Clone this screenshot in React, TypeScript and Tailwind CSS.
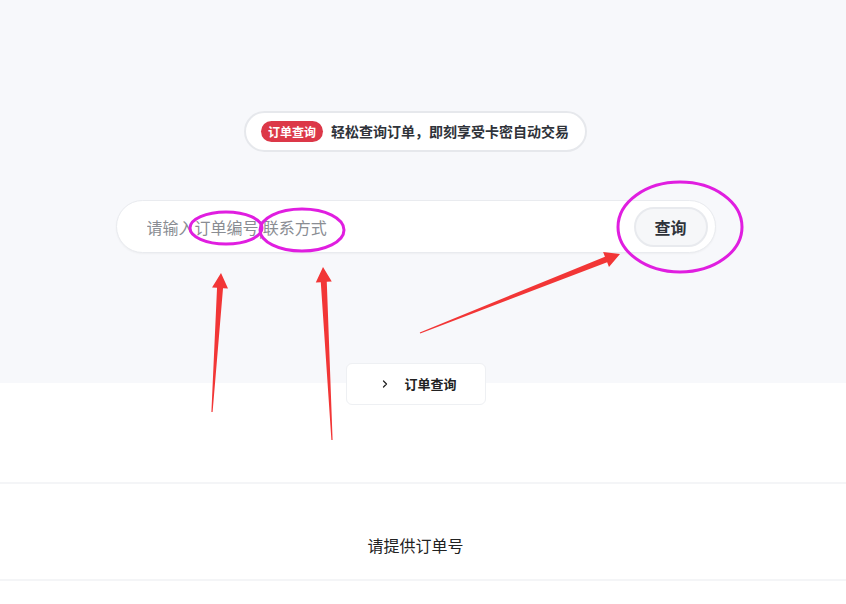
import { ChevronRight } from 'lucide-react';

const font = { fontFamily: '"Noto Sans CJK SC", "Noto Sans", sans-serif' };

// tapered arrow: thin at the tail, head at the tip
function arrowPoints(x1: number, y1: number, x2: number, y2: number) {
  const dx = x2 - x1;
  const dy = y2 - y1;
  const len = Math.hypot(dx, dy);
  const ux = dx / len;
  const uy = dy / len;
  const nx = -uy;
  const ny = ux;
  const head = 15;
  const bx = x2 - ux * head;
  const by = y2 - uy * head;
  const pts: [number, number][] = [
    [x1 + nx * 0.6, y1 + ny * 0.6],
    [bx + nx * 3, by + ny * 3],
    [bx + nx * 8, by + ny * 8],
    [x2, y2],
    [bx - nx * 8, by - ny * 8],
    [bx - nx * 3, by - ny * 3],
    [x1 - nx * 0.6, y1 - ny * 0.6],
  ];
  return pts.map(p => p.join(',')).join(' ');
}

function Annotations() {
  return (
    <svg className="absolute inset-0 pointer-events-none" width={846} height={604}>
      <ellipse cx={226} cy={228} rx={36} ry={16} fill="none" stroke="#e01ee0" strokeWidth={3} />
      <ellipse cx={302} cy={230} rx={42} ry={21} fill="none" stroke="#e01ee0" strokeWidth={3} />
      <ellipse cx={680} cy={227} rx={62} ry={45} fill="none" stroke="#e01ee0" strokeWidth={3} />
      <polygon points={arrowPoints(212, 412, 221, 273)} fill="#f23636" />
      <polygon points={arrowPoints(332, 440, 323, 267)} fill="#f23636" />
      <polygon points={arrowPoints(420, 333, 620, 254)} fill="#f23636" />
    </svg>
  );
}

export default function App() {
  return (
    <div className="relative w-[846px] h-[604px] overflow-hidden bg-white" style={font}>
      {/* Hero */}
      <section className="bg-[#f7f8fb] h-[383px]">
        <div className="w-[831px] pt-[111px] flex flex-col items-center">
          <div className="h-[41px] flex items-center gap-2 pl-[15px] pr-[16px] bg-white border-2 border-[#e6e8ec] rounded-full">
            <span className="h-[21px] px-[7px] flex items-center rounded-full bg-[#dc3848] text-white text-[12px] font-bold leading-none">
              订单查询
            </span>
            <span className="text-[14px] font-bold text-[#2f333a]">轻松查询订单，即刻享受卡密自动交易</span>
          </div>

          <div className="mt-[48px] w-[600px] h-[53px] flex items-center justify-between pl-[30px] pr-[7px] bg-white border border-[#e9ebef] rounded-full shadow-[0_1px_2px_rgba(0,0,0,0.04)]">
            <input
              className="flex-1 bg-transparent outline-none text-[16px] text-[#333] placeholder:text-[#8a8d93]"
              placeholder="请输入订单编号|联系方式"
            />
            <button className="w-[74px] h-[40px] rounded-full bg-[#f6f7f9] border-2 border-[#e8eaee] text-[16px] font-bold text-[#2f333a]">
              查询
            </button>
          </div>
        </div>
      </section>

      {/* Tab */}
      <div className="w-[831px] flex justify-center -mt-[20px]">
        <button className="w-[140px] h-[42px] flex items-center gap-[14px] pl-[32px] bg-white border border-[#eef0f3] rounded-md text-[13px] font-bold text-[#222]">
          <ChevronRight size={12} strokeWidth={2.5} />
          订单查询
        </button>
      </div>

      {/* Result */}
      <div className="mt-[77px] h-[99px] border-y-2 border-[#f4f5f7]">
        <div className="w-[831px] pt-[51px] flex justify-center">
          <span className="text-[16px] leading-[20px] text-[#222]">请提供订单号</span>
        </div>
      </div>
      <Annotations />
    </div>
  );
}
